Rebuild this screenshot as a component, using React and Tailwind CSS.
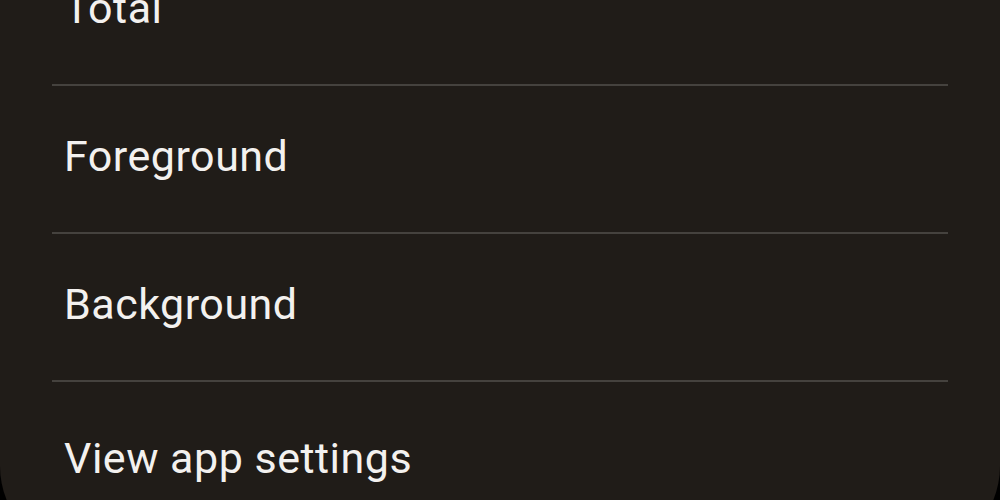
import React from "react";

const rows = ["Total", "Foreground", "Background", "View app settings"];

const App = () => {
  return (
    <main
      className="w-[1000px] h-[500px] overflow-hidden bg-black"
      style={{ fontFamily: "Roboto, 'Noto Sans', sans-serif" }}
    >
      <div className="-mt-[62px] bg-[#201c18] rounded-b-[90px] pb-[28px]">
        {rows.map((label, i) => (
          <div key={label}>
            {i > 0 && <div className="mx-[52px] h-[2px] bg-[#45423e]" />}
            <div
              className={
                i === rows.length - 1
                  ? "h-[146px] flex items-center px-[64px] pb-[6px] pt-[12px]"
                  : "h-[146px] flex items-center px-[64px] pb-[6px]"
              }
            >
              <span className="text-[43px] leading-none text-[#f3f1ef] tracking-[0.5px]">
                {label}
              </span>
            </div>
          </div>
        ))}
      </div>
    </main>
  );
};

export default App;
